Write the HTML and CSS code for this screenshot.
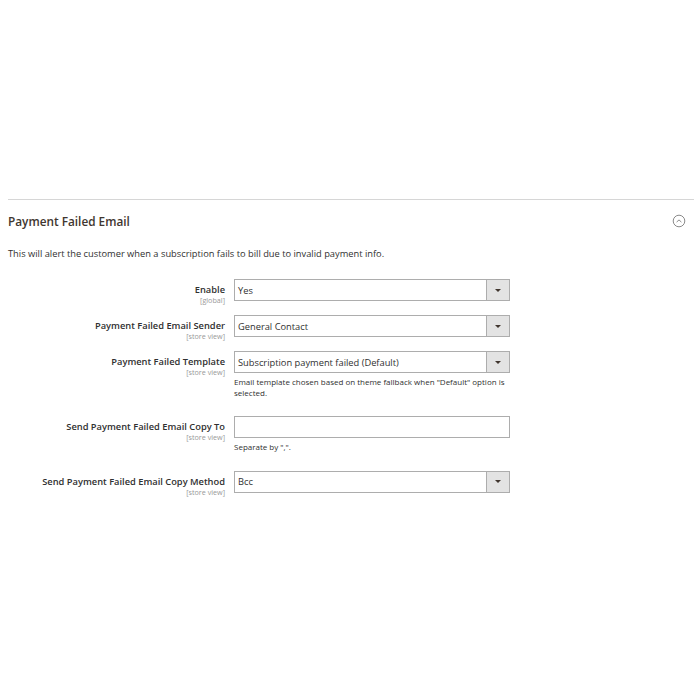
FILE: index.html
```html
<!DOCTYPE html>
<html lang="en">
<head>
    <meta charset="UTF-8">
    <title>Payment Failed Email</title>
    <link rel="stylesheet" href="styles.css">
</head>
<body>
    <div class="section">
        <div class="section-head">
            <h2>Payment Failed Email</h2>
            <svg class="toggle" width="14" height="14" viewBox="0 0 14 14">
                <circle cx="7" cy="7" r="5.8" fill="none" stroke="#8a8a8a" stroke-width="1"/>
                <path d="M4.6 8.1 L7 5.9 L9.4 8.1" fill="none" stroke="#8a8a8a" stroke-width="1"/>
            </svg>
        </div>

        <p class="comment">This will alert the customer when a subscription fails to bill due to invalid payment info.</p>

        <div class="row">
            <div class="label">
                <span>Enable</span>
                <span class="scope">[global]</span>
            </div>
            <div class="value">
                <div class="select"><span>Yes</span><i class="arrow"></i></div>
            </div>
        </div>

        <div class="row">
            <div class="label">
                <span>Payment Failed Email Sender</span>
                <span class="scope">[store view]</span>
            </div>
            <div class="value">
                <div class="select"><span>General Contact</span><i class="arrow"></i></div>
            </div>
        </div>

        <div class="row">
            <div class="label">
                <span>Payment Failed Template</span>
                <span class="scope">[store view]</span>
            </div>
            <div class="value">
                <div class="select"><span>Subscription payment failed (Default)</span><i class="arrow"></i></div>
                <p class="note">Email template chosen based on theme fallback when "Default" option is selected.</p>
            </div>
        </div>

        <div class="row">
            <div class="label">
                <span>Send Payment Failed Email Copy To</span>
                <span class="scope">[store view]</span>
            </div>
            <div class="value">
                <div class="input"></div>
                <p class="note">Separate by ",".</p>
            </div>
        </div>

        <div class="row">
            <div class="label">
                <span>Send Payment Failed Email Copy Method</span>
                <span class="scope">[store view]</span>
            </div>
            <div class="value">
                <div class="select"><span>Bcc</span><i class="arrow"></i></div>
            </div>
        </div>
    </div>
</body>
</html>
```

FILE: styles.css
```css
* {
    box-sizing: border-box;
    margin: 0;
    padding: 0;
}

body {
    background-color: #ffffff;
    font-family: "Open Sans", "Noto Sans", sans-serif;
    color: #303030;
    padding: 199px 6px 0 8px;
}

.section {
    border-top: 1px solid #d6d6d6;
}

.section-head {
    display: flex;
    justify-content: space-between;
    align-items: center;
    padding: 6px 8px 0 0;
    height: 35px;
}

.section-head h2 {
    font-size: 11.8px;
    font-weight: 600;
    color: #41362f;
}

.toggle {
    margin-top: 1px;
}

.comment {
    font-size: 9.3px;
    line-height: 12px;
    margin-top: 13px;
    margin-bottom: 19px;
}

.row {
    display: grid;
    grid-template-columns: 217px 276px;
    column-gap: 9px;
    align-items: start;
    margin-bottom: 14px;
}

.label {
    display: flex;
    flex-direction: column;
    align-items: flex-end;
    text-align: right;
    font-size: 9.3px;
    font-weight: 600;
    padding-top: 4px;
    line-height: 13px;
    margin-bottom: -4px;
}

.scope {
    font-size: 7.2px;
    font-weight: 400;
    color: #999999;
    line-height: 9px;
}

.select,
.input {
    height: 22px;
    border: 1px solid #adadad;
    background-color: #ffffff;
    display: flex;
    align-items: center;
    font-size: 9.3px;
}

.select span {
    flex-grow: 1;
    padding-left: 3px;
}

.arrow {
    width: 23px;
    height: 100%;
    background-color: #e3e3e3;
    border-left: 1px solid #adadad;
    display: flex;
    justify-content: center;
    align-items: center;
}

.arrow::after {
    content: "";
    border-left: 3px solid transparent;
    border-right: 3px solid transparent;
    border-top: 3.5px solid #41362f;
}

.note {
    font-size: 8px;
    line-height: 10.5px;
    margin-top: 4px;
    margin-bottom: 4px;
}
```
